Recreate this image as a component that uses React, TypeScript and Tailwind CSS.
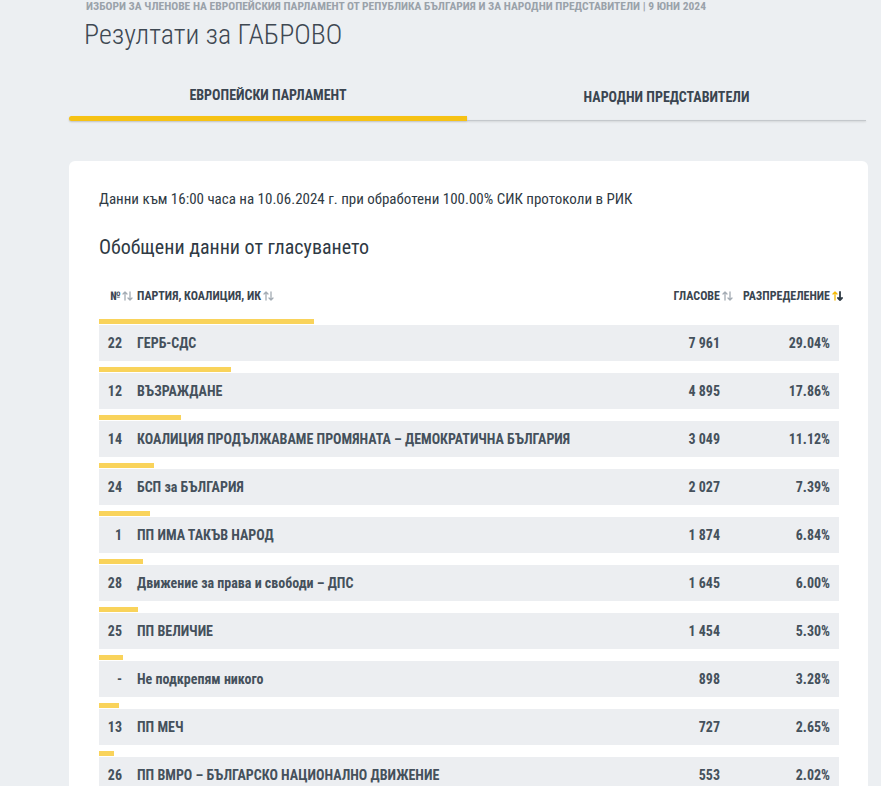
const rows = [
  { no: "22", name: "ГЕРБ-СДС", votes: "7 961", pct: 29.04 },
  { no: "12", name: "ВЪЗРАЖДАНЕ", votes: "4 895", pct: 17.86 },
  { no: "14", name: "КОАЛИЦИЯ ПРОДЪЛЖАВАМЕ ПРОМЯНАТА – ДЕМОКРАТИЧНА БЪЛГАРИЯ", votes: "3 049", pct: 11.12 },
  { no: "24", name: "БСП за БЪЛГАРИЯ", votes: "2 027", pct: 7.39 },
  { no: "1", name: "ПП ИМА ТАКЪВ НАРОД", votes: "1 874", pct: 6.84 },
  { no: "28", name: "Движение за права и свободи – ДПС", votes: "1 645", pct: 6.0 },
  { no: "25", name: "ПП ВЕЛИЧИЕ", votes: "1 454", pct: 5.3 },
  { no: "-", name: "Не подкрепям никого", votes: "898", pct: 3.28 },
  { no: "13", name: "ПП МЕЧ", votes: "727", pct: 2.65 },
  { no: "26", name: "ПП ВМРО – БЪЛГАРСКО НАЦИОНАЛНО ДВИЖЕНИЕ", votes: "553", pct: 2.02 },
];

function SortIcon({ active = false }: { active?: boolean }) {
  return (
    <svg width="11" height="10" viewBox="0 0 11 10" className="ml-[2px] shrink-0">
      <g fill="none" strokeWidth="1.3" strokeLinecap="round" strokeLinejoin="round">
        <path d="M3 9V1M1 3l2-2 2 2" stroke={active ? "#f5b800" : "#a3abb3"} />
        <path d="M8 1v8M6 7l2 2 2-2" stroke={active ? "#2f3a44" : "#a3abb3"} strokeWidth={active ? 1.8 : 1.3} />
      </g>
    </svg>
  );
}

export default function App() {
  return (
    <div className="min-h-screen overflow-hidden bg-[#eceff2] font-['Roboto_Condensed','Liberation_Sans_Narrow','DejaVu_Sans_Condensed',sans-serif] text-[#3e4852]">
      <div className="ml-[69px] w-[799px]">
        <div className="-mt-[1px] pl-[17px] text-[11.5px] font-bold uppercase leading-[14px] text-[#9aa2aa] whitespace-nowrap">
          Избори за членове на Европейския парламент от Република България и за народни представители | 9 юни 2024
        </div>
        <h1 className="mt-[5px] pl-[15px] text-[28px] font-light leading-[34px] text-[#3e4852]">Резултати за ГАБРОВО</h1>

        <div className="mt-[26px] flex w-[797px]">
          <div className="flex h-[43px] w-[398px] flex-col">
            <div className="flex flex-1 items-center justify-center pb-[4px] text-[14px] font-bold uppercase text-[#3a4550]">
              Европейски парламент
            </div>
            <div className="h-[5px] rounded-l-full bg-[#f6c215] shadow-[0_1px_2px_rgba(0,0,0,0.2)]" />
          </div>
          <div className="flex h-[43px] flex-1 flex-col">
            <div className="flex flex-1 items-center justify-center pb-[4px] text-[14px] font-bold uppercase text-[#3a4550]">
              Народни представители
            </div>
            <div className="h-[1px] bg-[#c4c8cc] shadow-[0_1px_2px_rgba(0,0,0,0.15)]" />
          </div>
        </div>

        <div className="mt-[40px] rounded-md bg-white px-[30px] pb-[40px] pt-[28px]">
          <p className="text-[15px] leading-[20px] text-[#2f3a44]">
            Данни към 16:00 часа на 10.06.2024 г. при обработени 100.00% СИК протоколи в РИК
          </p>
          <h2 className="mt-[25px] text-[20px] leading-[26px] text-[#2f3a44]">Обобщени данни от гласуването</h2>

          <div className="mt-[29px] w-[740px]">
            <div className="flex h-[14px] items-center pr-[9px] text-[12px] font-bold uppercase text-[#3a4550]">
              <div className="flex w-[23px] items-center whitespace-nowrap pl-[11px]">
                №<SortIcon />
              </div>
              <div className="ml-[15px] flex flex-1 items-center">
                Партия, коалиция, ИК<SortIcon />
              </div>
              <div className="-mr-[13px] flex items-center">
                Гласове<SortIcon />
              </div>
              <div className="-mr-[13px] flex w-[123px] items-center justify-end">
                Разпределение<SortIcon active />
              </div>
            </div>

            <div className="mt-[16px]">
              {rows.map((r) => (
                <div key={r.no + r.name} className="mb-[6px]">
                  <div className="mb-[1px] h-[5px] bg-[#f9d35b]" style={{ width: `${(r.pct * 740) / 100}px` }} />
                  <div className="flex h-[36px] items-center bg-[#eceef1] pr-[9px] text-[14px] font-bold text-[#45515c]">
                    <div className="w-[23px] text-right">{r.no}</div>
                    <div className="ml-[15px] flex-1 whitespace-nowrap">{r.name}</div>
                    <div className="text-right">{r.votes}</div>
                    <div className="w-[110px] text-right">{r.pct.toFixed(2)}%</div>
                  </div>
                </div>
              ))}
            </div>
          </div>
        </div>
      </div>
    </div>
  );
}
